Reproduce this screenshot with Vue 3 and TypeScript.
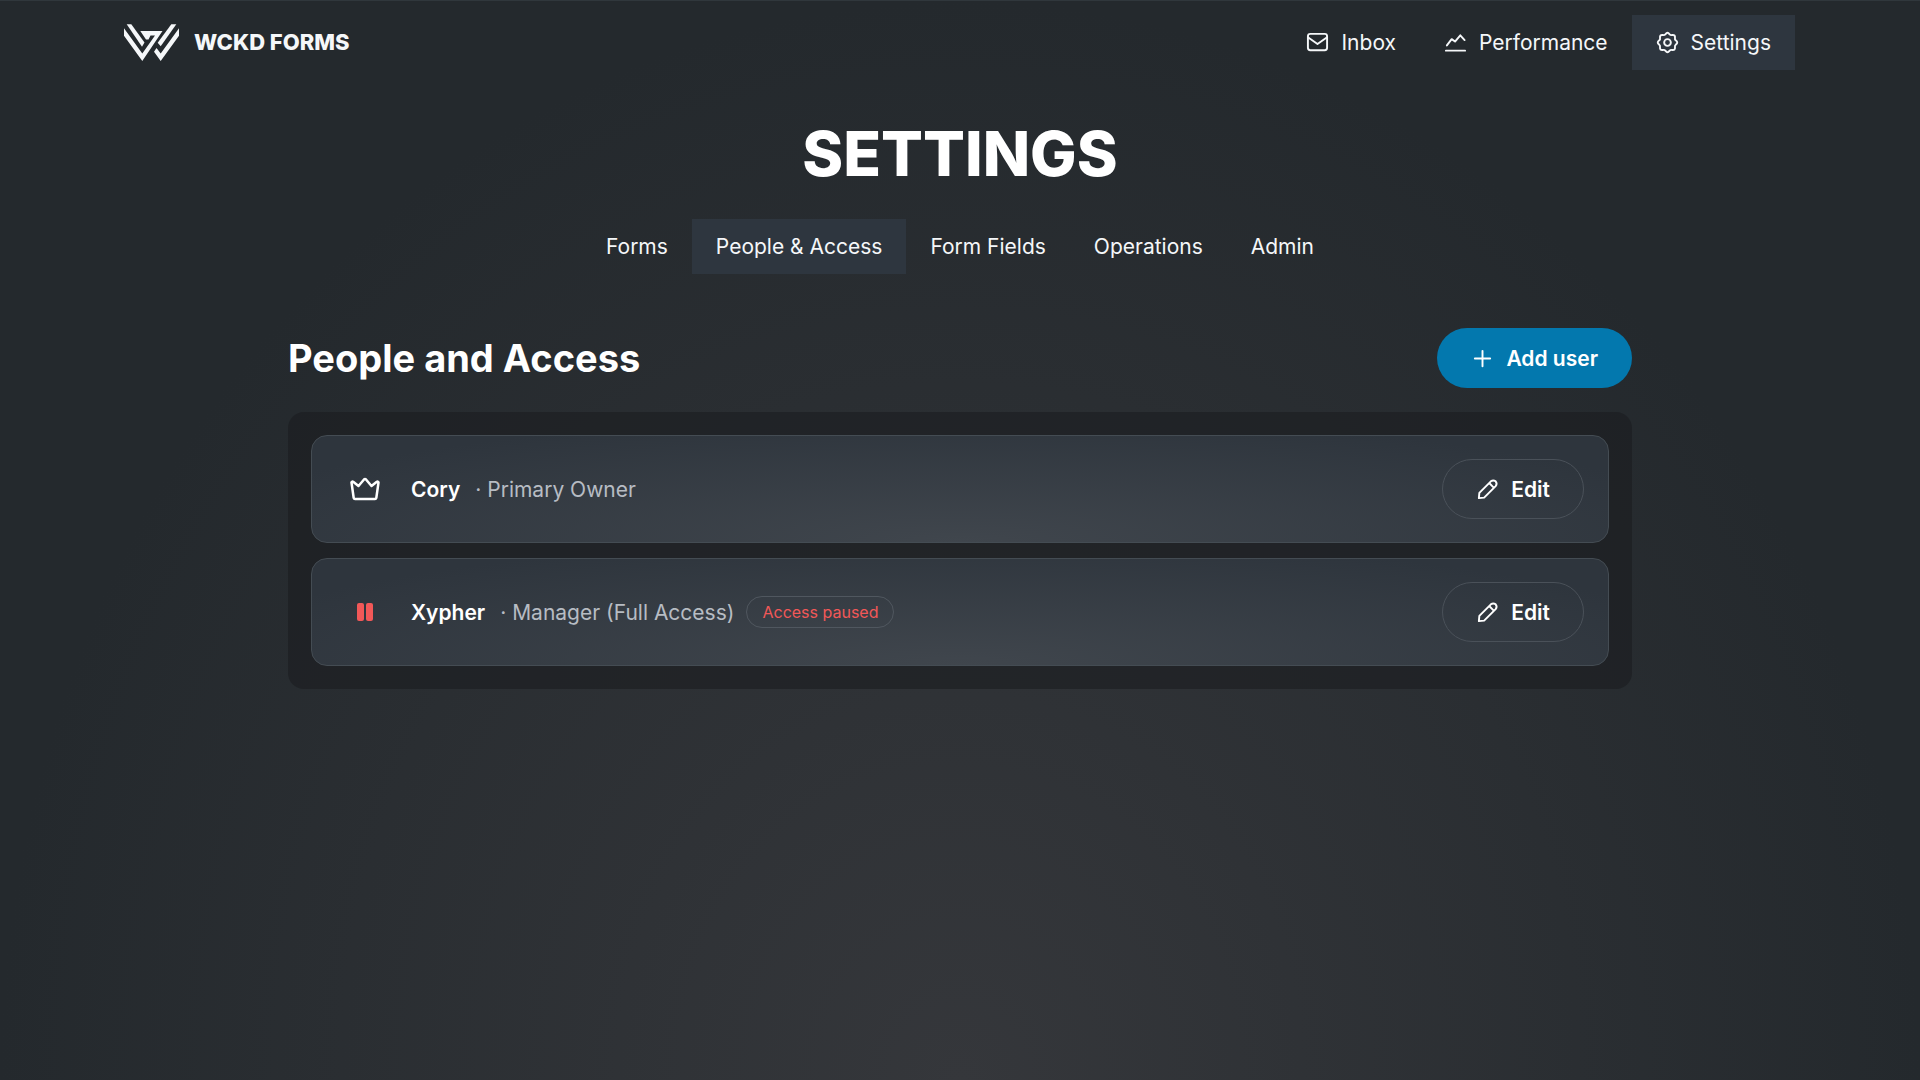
<script setup lang="ts">
import { ref } from 'vue'

interface Member {
  name: string
  role: string
  owner: boolean
  paused: boolean
}

const tabs = ['Forms', 'People & Access', 'Form Fields', 'Operations', 'Admin']
const activeTab = ref('People & Access')

const members: Member[] = [
  { name: 'Cory', role: 'Primary Owner', owner: true, paused: false },
  { name: 'Xypher', role: 'Manager (Full Access)', owner: false, paused: true },
]
</script>

<template>
  <div class="page">
    <header class="topbar">
      <a class="brand" href="#">
        <svg class="logo" viewBox="0 0 55 37" fill="currentColor" aria-hidden="true">
          <path d="M0 4.300 L18.300 29.500 L31 11.500 H26.500 L24.500 15.500 H22 L16.300 7 H38.500 L18.300 37 L0 11.700 Z" />
          <path d="M2.700 0.300 H7.300 L20.500 18.500 L18 22.700 Z" />
          <path d="M47.300 0.300 H52.300 L36.700 22.300 L33.700 18.700 Z" />
          <path d="M55 4.300 V11.700 L36.700 37 L30 27.700 L32.500 24 L36.700 29.500 Z" />
        </svg>
        <span class="brand-name">WCKD FORMS</span>
      </a>
      <nav class="mainnav" aria-label="Main">
        <a class="navlink" href="#inbox">
          <svg class="icon" viewBox="0 0 24 24" aria-hidden="true">
            <rect x="2" y="3" width="20" height="17" rx="2.500" />
            <path d="M2 6.500 L12 13.500 L22 6.500" />
          </svg>
          Inbox
        </a>
        <a class="navlink" href="#performance">
          <svg class="icon" viewBox="0 0 24 24" aria-hidden="true">
            <path d="M2 20.500 H22 M3 15 L8 8.500 L11.500 11 L17 4.500 L21.500 9.500" />
          </svg>
          Performance
        </a>
        <a class="navlink active" href="#settings" aria-current="page">
          <svg class="icon" viewBox="0 0 24 24" aria-hidden="true">
            <path d="M10 3.200 Q12 0.500 14 3.200 Q15.200 4.600 16.900 4.200 Q20.200 3.800 19.800 7.100 Q19.400 8.800 20.800 10 Q23.500 12 20.800 14 Q19.400 15.200 19.800 16.900 Q20.200 20.200 16.900 19.800 Q15.200 19.400 14 20.800 Q12 23.500 10 20.800 Q8.800 19.400 7.100 19.800 Q3.800 20.200 4.200 16.900 Q4.600 15.200 3.200 14 Q0.500 12 3.200 10 Q4.600 8.800 4.200 7.100 Q3.800 3.800 7.100 4.200 Q8.800 4.600 10 3.200 Z" />
            <circle cx="12" cy="12" r="3.500" />
          </svg>
          Settings
        </a>
      </nav>
    </header>

    <main class="content">
      <h1>SETTINGS</h1>
      <nav class="tabs" aria-label="Settings sections">
        <a
          v-for="tab in tabs"
          :key="tab"
          href="#"
          class="navlink"
          :class="{ active: tab === activeTab }"
          @click.prevent="activeTab = tab"
        >{{ tab }}</a>
      </nav>

      <section class="people">
        <div class="section-head">
          <h2>People and Access</h2>
          <button type="button" class="pill primary">
            <svg class="icon" viewBox="0 0 24 24" aria-hidden="true"><path d="M12 4 V20 M4 12 H20" /></svg>
            Add user
          </button>
        </div>
        <ul class="panel">
          <li v-for="member in members" :key="member.name" class="row">
            <span class="status">
              <svg v-if="member.owner" class="crown" viewBox="0 0 30 24" aria-hidden="true">
                <path d="M1.500 5.500 Q2 4 3.500 5 L8.500 9 L14 2.500 Q15 1.500 16 2.500 L21.500 9 L26.500 5 Q28 4 28.500 5.500 L26.300 21 Q26 22 25 22 H5 Q4 22 3.700 21 Z" />
              </svg>
              <svg v-else class="pause" viewBox="0 0 16 18" aria-hidden="true">
                <rect x="0" y="0" width="7" height="18" rx="2" />
                <rect x="9" y="0" width="7" height="18" rx="2" />
              </svg>
            </span>
            <strong class="name">{{ member.name }}</strong>
            <span class="role">· {{ member.role }}</span>
            <span v-if="member.paused" class="badge">Access paused</span>
            <button type="button" class="pill outline">
              <svg class="icon" viewBox="0 0 24 24" aria-hidden="true">
                <path d="M3 21 L3.500 15.500 L15.500 3.500 Q18 1.500 20.500 3.500 Q22.500 6 20.500 8.500 L8.500 20.500 Z M14 5.500 L18.500 10" />
              </svg>
              Edit
            </button>
          </li>
        </ul>
      </section>
    </main>
  </div>
</template>

<style>
body {
  margin: 0;
  background: #24292d;
}
</style>

<style scoped>
.page {
  box-sizing: border-box;
  min-height: 100vh;
  border-top: 1px solid #30373c;
  background: radial-gradient(ellipse 50% 100% at 50% 100%, #35373b, #24292d);
  color: #f5f7f9;
  font-family: Inter, "Liberation Sans", sans-serif;
  font-size: 21px;
  line-height: 33px;
}

a {
  color: inherit;
  text-decoration: none;
}

.topbar {
  display: flex;
  align-items: center;
  justify-content: space-between;
  padding: 14px 125px 0 124px;
}

.brand {
  display: flex;
  align-items: center;
  gap: 15px;
}

.logo {
  width: 55px;
  height: 37px;
}

.brand-name {
  font-size: 22px;
  font-weight: 800;
}

.mainnav,
.tabs {
  display: flex;
}

.tabs {
  justify-content: center;
}

.navlink {
  display: flex;
  align-items: center;
  gap: 12px;
  height: 55px;
  padding: 0 24px;
}

.navlink.active {
  background: #2e363f;
}

.icon {
  width: 23px;
  height: 23px;
  fill: none;
  stroke: currentColor;
  stroke-width: 2;
  stroke-linejoin: round;
  stroke-linecap: round;
}

h1 {
  margin: 44px 0 25px;
  color: #fff;
  font-size: 62px;
  font-weight: 800;
  line-height: 80px;
  text-align: center;
}

.people {
  width: 70%;
  margin: 54px auto 0;
}

.section-head {
  display: flex;
  align-items: center;
  justify-content: space-between;
}

h2 {
  margin: 0;
  color: #fff;
  font-size: 38px;
  font-weight: 700;
  line-height: 50px;
}

.pill {
  display: flex;
  align-items: center;
  gap: 12px;
  box-sizing: border-box;
  height: 60px;
  padding: 0 33px;
  border: 1px solid transparent;
  border-radius: 30px;
  background: none;
  color: #fff;
  font: inherit;
  font-weight: 600;
}

.primary {
  background: #0378ae;
}

.outline {
  margin-left: auto;
  border-color: #4a5159;
}

.panel {
  display: flex;
  flex-direction: column;
  gap: 15px;
  margin: 24px 0 0;
  padding: 23px;
  border-radius: 16px;
  background: rgba(26, 28, 31, 0.6);
  list-style: none;
}

.row {
  display: flex;
  align-items: center;
  padding: 23px 24px;
  border: 1px solid #444c53;
  border-radius: 16px;
  background: radial-gradient(ellipse 60% 120% at 50% 100%, #40464d, #2e353d);
}

.status {
  display: flex;
  justify-content: center;
  width: 58px;
  margin-right: 17px;
}

.crown {
  width: 30px;
  height: 24px;
  fill: none;
  stroke: #fff;
  stroke-width: 2.5;
  stroke-linejoin: round;
}

.pause {
  width: 16px;
  height: 18px;
  fill: #f25858;
}

.name {
  margin-right: 15px;
  color: #fff;
  font-weight: 600;
}

.role {
  color: #b7bcc3;
}

.badge {
  margin-left: 12px;
  padding: 0 15px;
  border: 1px solid #50575f;
  border-radius: 16px;
  color: #f25858;
  font-size: 16px;
  line-height: 30px;
}
</style>
